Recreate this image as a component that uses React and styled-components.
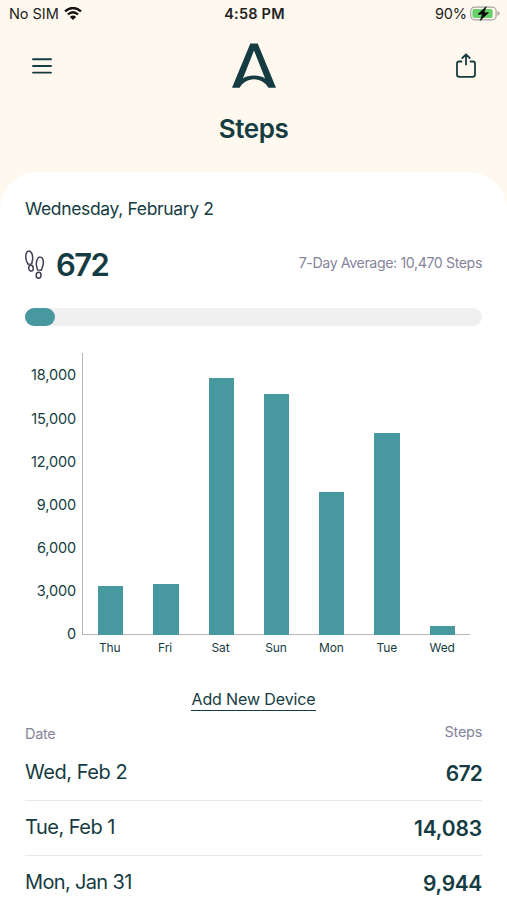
import React from "react";
import styled, { createGlobalStyle } from "styled-components";

const ink = "#153c42";
const teal = "#47999f";
const muted = "#85849b";

const ticks = ["18,000", "15,000", "12,000", "9,000", "6,000", "3,000", "0"];

const week = [
    { day: "Thu", height: 49 },
    { day: "Fri", height: 51 },
    { day: "Sat", height: 257.5 },
    { day: "Sun", height: 241 },
    { day: "Mon", height: 143 },
    { day: "Tue", height: 202.5 },
    { day: "Wed", height: 9.5 },
];

const history = [
    { date: "Wed, Feb 2", steps: "672", dateGap: -0.45, stepsGap: -0.8 },
    { date: "Tue, Feb 1", steps: "14,083", dateGap: -0.5, stepsGap: -0.15 },
    { date: "Mon, Jan 31", steps: "9,944", dateGap: -0.65, stepsGap: -0.35 },
];

const WifiIcon = () => (
    <svg width="18" height="14" viewBox="0 0 18 14" fill="none" stroke="#111">
        <path d="M1 4.4Q9-2.4 17 4.4" strokeWidth="2.4" />
        <path d="M3.9 7.5Q9 3 14.1 7.5" strokeWidth="2.3" />
        <path d="M9 13.1 5.9 9.9Q9 7.3 12.1 9.9Z" fill="#111" stroke="none" />
    </svg>
);

const BatteryIcon = () => (
    <svg width="30" height="16" viewBox="0 0 30 16">
        <rect x=".7" y="1.2" width="25.4" height="12.6" rx="3.8" fill="#fff9f1" stroke="#a5a5a1" strokeWidth="1.2" />
        <rect x="2.4" y="2.9" width="20.3" height="9.2" rx="2.2" fill="#69d16c" />
        <path d="M27.5 5.1Q29.6 6 29.6 7.5T27.5 9.9Z" fill="#a5a5a1" />
        <path d="M16.3 .5 8 8.3H12.6L10.1 14.5 18.5 6.7H13.8Z" fill="#050505" stroke="#050505" strokeWidth=".6" />
    </svg>
);

const MenuIcon = () => (
    <svg width="20" height="18" viewBox="0 0 20 18" stroke={ink} strokeWidth="1.9" strokeLinecap="round">
        <path d="M1 2.3H19M1 9H19M1 15.6H19" />
    </svg>
);

const ShareIcon = () => (
    <svg width="20" height="26" viewBox="0 0 20 26" fill="none" stroke={ink} strokeWidth="1.8" strokeLinecap="round" strokeLinejoin="round">
        <path d="M5.4 8.5H3Q1 8.5 1 10.5V21.5Q1 23.8 3.3 23.8H16.7Q19 23.8 19 21.5V10.5Q19 8.5 17 8.5H14.6" />
        <path d="M10 11.5V1.6M6.3 5 10 1.4 13.7 5" />
    </svg>
);

const Logo = () => (
    <svg width="44" height="46" viewBox="0 0 44 46" fill={ink}>
        <path
            fillRule="evenodd"
            d="M18.3 .5H25.7L44 44.8H36.4C33.5 39.7 28.6 36.2 22 36.2S10.5 39.7 7.6 44.8H0ZM22 7.4 10.9 35.4C13.8 33.4 17.7 32.6 22 32.6S30.2 33.4 33.1 35.4Z"
        />
    </svg>
);

const FootstepsIcon = () => (
    <svg width="20" height="30" viewBox="0 0 20 30" fill="none" stroke="#413c55" strokeWidth="1.5">
        <path d="M3.6 1C6 .8 7.6 4.2 7.7 7.8C7.8 10 7.1 11.2 6.7 13.9L3.1 14.3C2 11.8.9 10.4.8 7.8C.6 4.4 1.5 1.1 3.6 1Z" />
        <ellipse cx="6" cy="18.2" rx="2.3" ry="2.9" transform="rotate(-8 6 18.2)" />
        <path d="M15.3 7.1C17.6 7.2 18.7 10.1 18.3 13.5C18.1 16.2 17 17.6 16.2 20.3L12.5 19.9C12 17.2 11.1 15.7 11.3 13.3C11.6 9.8 13.1 6.9 15.3 7.1Z" />
        <ellipse cx="13.6" cy="25.2" rx="2.4" ry="3" transform="rotate(8 13.6 25.2)" />
    </svg>
);

const App = () => {
    return (
        <Screen>
            <GlobalStyle />
            <StatusBar>
                <Carrier>
                    <StatusText $gap="-0.05px">No SIM</StatusText>
                    <WifiIcon />
                </Carrier>
                <StatusText $bold $gap="0.2px">4:58 PM</StatusText>
                <Power>
                    <StatusText $gap="-0.1px">90%</StatusText>
                    <BatteryIcon />
                </Power>
            </StatusBar>

            <Header>
                <IconButton aria-label="Menu"><MenuIcon /></IconButton>
                <Logo />
                <IconButton $end aria-label="Share"><ShareIcon /></IconButton>
            </Header>
            <Title>Steps</Title>

            <Card>
                <Today>Wednesday, February 2</Today>
                <Summary>
                    <Count>
                        <FootstepsIcon />
                        <CountValue>672</CountValue>
                    </Count>
                    <Average>7-Day Average: 10,470 Steps</Average>
                </Summary>
                <Track><Fill /></Track>

                <Chart>
                    <Scale>
                        {ticks.map((tick) => <Tick key={tick}>{tick}</Tick>)}
                    </Scale>
                    <Graph>
                        <Plot>
                            {week.map((item) => <Bar key={item.day} style={{ height: item.height }} />)}
                        </Plot>
                        <Days>
                            {week.map((item) => <Day key={item.day}>{item.day}</Day>)}
                        </Days>
                    </Graph>
                </Chart>

                <AddDevice>Add New Device</AddDevice>

                <TableHead>
                    <HeadLabel>Date</HeadLabel>
                    <HeadLabel $raised>Steps</HeadLabel>
                </TableHead>
                {history.map((item) => (
                    <Row key={item.date}>
                        <RowDate $gap={item.dateGap}>{item.date}</RowDate>
                        <RowSteps $gap={item.stepsGap}>{item.steps}</RowSteps>
                    </Row>
                ))}
            </Card>
        </Screen>
    );
};

export default App;

const GlobalStyle = createGlobalStyle`
    * {
        box-sizing: border-box;
    }

    body {
        margin: 0;
        overflow: hidden;
    }

    svg {
        display: block;
        flex: none;
    }
`;

const Screen = styled.div`
    display: flex;
    flex-direction: column;
    width: 507px;
    height: 900px;
    overflow: hidden;
    background: #fff8ef;
    color: ${ink};
    font-family: Inter, "Liberation Sans", sans-serif;
    white-space: nowrap;
`;

const StatusBar = styled.div`
    display: grid;
    flex: none;
    grid-template-columns: 1fr auto 1fr;
    align-items: center;
    height: 27px;
    padding: 0 7px 0 9px;
`;

const Carrier = styled.div`
    display: flex;
    align-items: center;
    gap: 5px;
`;

const Power = styled.div`
    display: flex;
    align-items: center;
    justify-content: flex-end;
    gap: 3px;
`;

const StatusText = styled.span`
    color: #222;
    font-size: 14.5px;
    font-weight: ${(props) => (props.$bold ? 600 : 400)};
    letter-spacing: ${(props) => props.$gap};
`;

const Header = styled.div`
    display: grid;
    flex: none;
    grid-template-columns: 1fr 44px 1fr;
    align-items: center;
    height: 46px;
    margin-top: 16px;
    padding: 0 31px 0 32px;
`;

const IconButton = styled.button`
    justify-self: ${(props) => (props.$end ? "end" : "start")};
    padding: 0;
    border: none;
    background: none;
`;

const Title = styled.h1`
    flex: none;
    height: 83px;
    margin: 0;
    padding-top: 24px;
    font-size: 26px;
    font-weight: 600;
    line-height: 32px;
    letter-spacing: -0.4px;
    text-align: center;
`;

const Card = styled.main`
    display: flex;
    flex: none;
    flex-direction: column;
    padding: 26px 25px 0;
    border-radius: 38px 38px 0 0;
    background: #fff;
`;

const Today = styled.div`
    height: 22px;
    font-size: 17.5px;
    line-height: 22px;
    letter-spacing: -0.35px;
`;

const Summary = styled.div`
    display: flex;
    align-items: center;
    justify-content: space-between;
    height: 40px;
    margin-top: 25px;
`;

const Count = styled.div`
    display: flex;
    align-items: center;
    gap: 11px;
`;

const CountValue = styled.strong`
    font-size: 31px;
    font-weight: 600;
    line-height: 40px;
    letter-spacing: -1.6px;
`;

const Average = styled.span`
    margin-top: -6px;
    color: ${muted};
    font-size: 14.2px;
    letter-spacing: -0.4px;
`;

const Track = styled.div`
    height: 18px;
    margin-top: 23px;
    border-radius: 9px;
    background: #f1f0f0;
`;

const Fill = styled.div`
    width: 30px;
    height: 100%;
    border-radius: 9px;
    background: ${teal};
`;

const Chart = styled.div`
    display: flex;
    height: 308px;
    margin-top: 27px;
`;

const Scale = styled.div`
    width: 51px;
    padding-top: 12.4px;
`;

const Tick = styled.div`
    height: 43.15px;
    font-size: 14.5px;
    line-height: 20px;
    letter-spacing: -0.15px;
    text-align: right;
`;

const Graph = styled.div`
    width: 388px;
    margin-left: 6px;
`;

const Plot = styled.div`
    display: flex;
    align-items: flex-end;
    justify-content: space-around;
    height: 282px;
    border-left: 1px solid #b5b8b8;
    background: linear-gradient(#b5b8b8, #b5b8b8) bottom / 100% 1px no-repeat;
`;

const Bar = styled.div`
    width: 25.4px;
    background: ${teal};
`;

const Days = styled.div`
    display: flex;
    padding-top: 5px;
`;

const Day = styled.span`
    flex: 1;
    font-size: 12px;
    line-height: 16px;
    letter-spacing: -0.1px;
    text-align: center;
`;

const AddDevice = styled.button`
    align-self: center;
    height: 23px;
    margin-top: 27px;
    padding: 0;
    border: none;
    border-bottom: 1.5px solid ${ink};
    background: none;
    color: ${ink};
    font-family: inherit;
    font-size: 16px;
    line-height: 20px;
    letter-spacing: -0.12px;
`;

const TableHead = styled.div`
    display: flex;
    justify-content: space-between;
    height: 35px;
    padding-top: 13px;
`;

const HeadLabel = styled.span`
    margin-top: ${(props) => (props.$raised ? "-2px" : "0")};
    color: ${muted};
    font-size: 14.5px;
    line-height: 20px;
    letter-spacing: -0.3px;
`;

const Row = styled.div`
    display: flex;
    flex: none;
    align-items: center;
    justify-content: space-between;
    height: 55px;
    padding-bottom: 2px;
    border-bottom: 1px solid #e9e9eb;
`;

const RowDate = styled.span`
    font-size: 20px;
    letter-spacing: ${(props) => props.$gap}px;
`;

const RowSteps = styled.strong`
    padding-top: 2px;
    font-size: 21px;
    font-weight: 600;
    letter-spacing: ${(props) => props.$gap}px;
`;
